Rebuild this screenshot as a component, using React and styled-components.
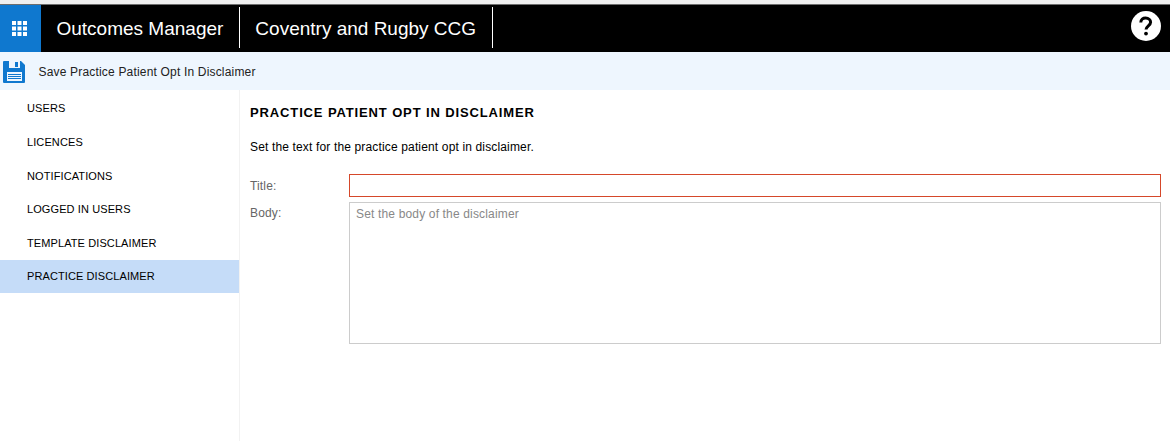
import React from 'react';
import styled, { createGlobalStyle } from 'styled-components';

const menuItems = ['USERS', 'LICENCES', 'NOTIFICATIONS', 'LOGGED IN USERS', 'TEMPLATE DISCLAIMER', 'PRACTICE DISCLAIMER'];

const GridIcon = () => (
	<svg width="15" height="15" viewBox="0 0 15 15" fill="#fff">
		{[0, 5.5, 11].map((y) => [0, 5.5, 11].map((x) => (
			<rect key={`${x}-${y}`} x={x} y={y} width="4" height="4" />
		)))}
	</svg>
);

const SaveIcon = () => (
	<svg width="22" height="22" viewBox="0 0 22 22">
		<path d="M1 0H18L22 4V21a1 1 0 0 1-1 1H1a1 1 0 0 1-1-1V1a1 1 0 0 1 1-1Z" fill="#0f78cf" />
		<rect x="6" y="0" width="11" height="7" fill="#eef6fe" />
		<rect x="12" y="1" width="3" height="5" fill="#0f78cf" />
		<rect x="4" y="11" width="15" height="9" fill="#eef6fe" />
		<rect x="5" y="13" width="13" height="1" fill="#0f78cf" />
		<rect x="5" y="15" width="13" height="1" fill="#0f78cf" />
		<rect x="5" y="17" width="13" height="1" fill="#0f78cf" />
	</svg>
);

const HelpIcon = () => (
	<svg width="30" height="30" viewBox="0 0 30 30">
		<circle cx="15" cy="15" r="15" fill="#fff" />
		<path d="M9.8 11.5C9.8 8.5 12 7 14.6 7C17.6 7 19.6 9 19.6 11.2C19.6 14.6 15 15 15 18.6" fill="none" stroke="#000" strokeWidth="3" />
		<circle cx="15" cy="22.6" r="1.9" fill="#000" />
	</svg>
);

const App = () => (
	<>
		<GlobalStyle />
		<Page>
			<TopEdge />
			<Header>
				<AppTile><GridIcon /></AppTile>
				<HeaderTitle>Outcomes Manager</HeaderTitle>
				<HeaderTitle>Coventry and Rugby CCG</HeaderTitle>
				<HelpButton><HelpIcon /></HelpButton>
			</Header>
			<Toolbar>
				<SaveButton><SaveIcon /></SaveButton>
				<ToolbarLabel>Save Practice Patient Opt In Disclaimer</ToolbarLabel>
			</Toolbar>
			<Body>
				<Sidebar>
					{menuItems.map((item) => (
						<MenuItem key={item} $active={item === 'PRACTICE DISCLAIMER'}>{item}</MenuItem>
					))}
				</Sidebar>
				<Content>
					<Heading>PRACTICE PATIENT OPT IN DISCLAIMER</Heading>
					<Intro>Set the text for the practice patient opt in disclaimer.</Intro>
					<Form>
						<FieldLabel $top={5}>Title:</FieldLabel>
						<TitleInput />
						<FieldLabel $top={4}>Body:</FieldLabel>
						<BodyInput placeholder="Set the body of the disclaimer" />
					</Form>
				</Content>
			</Body>
		</Page>
	</>
);

const GlobalStyle = createGlobalStyle`
	html, body {
		margin: 0;
		padding: 0;
		height: 100%;
		background: #fff;
		overflow: hidden;
	}
	body {
		font-family: "Liberation Sans", Arial, sans-serif;
	}
`
const Page = styled.div`
	display: flex;
	flex-direction: column;
	height: 441px;
`
const TopEdge = styled.div`
	height: 5px;
	box-sizing: border-box;
	background: #f0f0f0;
	border-bottom: 1px solid #6e6e6e;
`
const Header = styled.header`
	display: flex;
	align-items: stretch;
	height: 47px;
	background: #000;
`
const AppTile = styled.div`
	display: flex;
	align-items: center;
	justify-content: center;
	width: 41px;
	padding-right: 2px;
	box-sizing: border-box;
	background: #0f78cf;
`
const HeaderTitle = styled.div`
	display: flex;
	align-items: center;
	box-sizing: border-box;
	height: 41px;
	margin-top: 2px;
	padding: 2px 15.5px 0;
	border-right: 1px solid #fff;
	color: #fff;
	font-size: 19px;
`
const HelpButton = styled.div`
	display: flex;
	align-items: center;
	margin-left: auto;
	padding-right: 9px;
	padding-bottom: 5px;
`
const Toolbar = styled.div`
	display: flex;
	align-items: center;
	height: 38px;
	background: #eef6fe;
`
const SaveButton = styled.div`
	display: flex;
	margin-left: 3px;
	margin-top: 1px;
`
const ToolbarLabel = styled.span`
	margin-left: 13.5px;
	padding-top: 1px;
	font-size: 12px;
	letter-spacing: 0.18px;
	color: #222;
`
const Body = styled.div`
	display: flex;
	flex: 1;
	min-height: 0;
`
const Sidebar = styled.nav`
	display: flex;
	flex-direction: column;
	box-sizing: border-box;
	width: 240px;
	padding-top: 1.55px;
	border-right: 1px solid #f2f2f2;
`
const MenuItem = styled.div`
	display: flex;
	align-items: center;
	height: 33.6px;
	padding-left: 27px;
	font-size: 11px;
	letter-spacing: 0.1px;
	color: #000;
	background: ${({ $active }) => ($active ? '#c5dcf8' : 'transparent')};
`
const Content = styled.main`
	flex: 1;
	min-width: 0;
	padding: 15px 9px 0 10px;
`
const Heading = styled.h1`
	margin: 0;
	font-size: 13px;
	line-height: 15px;
	font-weight: bold;
	letter-spacing: 0.87px;
	color: #000;
`
const Intro = styled.p`
	margin: 20px 0 0;
	font-size: 12px;
	line-height: 14px;
	letter-spacing: 0.15px;
	color: #000;
`
const Form = styled.div`
	display: grid;
	grid-template-columns: 99px 1fr;
	row-gap: 5px;
	margin-top: 20px;
`
const FieldLabel = styled.label`
	font-size: 12px;
	line-height: 14px;
	padding-top: ${({ $top }) => $top}px;
	letter-spacing: 0.15px;
	color: #666;
`
const TitleInput = styled.input`
	box-sizing: border-box;
	width: 100%;
	height: 23px;
	margin: 0;
	padding: 0 6px;
	border: 1px solid #d5482a;
	border-radius: 0;
	outline: none;
	background: #fff;
`
const BodyInput = styled.textarea`
	display: block;
	box-sizing: border-box;
	width: 100%;
	height: 142px;
	margin: 0;
	padding: 4px 6px;
	border: 1px solid #ccc;
	border-radius: 0;
	outline: none;
	resize: none;
	font-family: "Liberation Sans", Arial, sans-serif;
	font-size: 12px;
	line-height: 14px;
	letter-spacing: 0.16px;
	&::placeholder {
		color: #888;
		opacity: 1;
	}
`

export default App;
